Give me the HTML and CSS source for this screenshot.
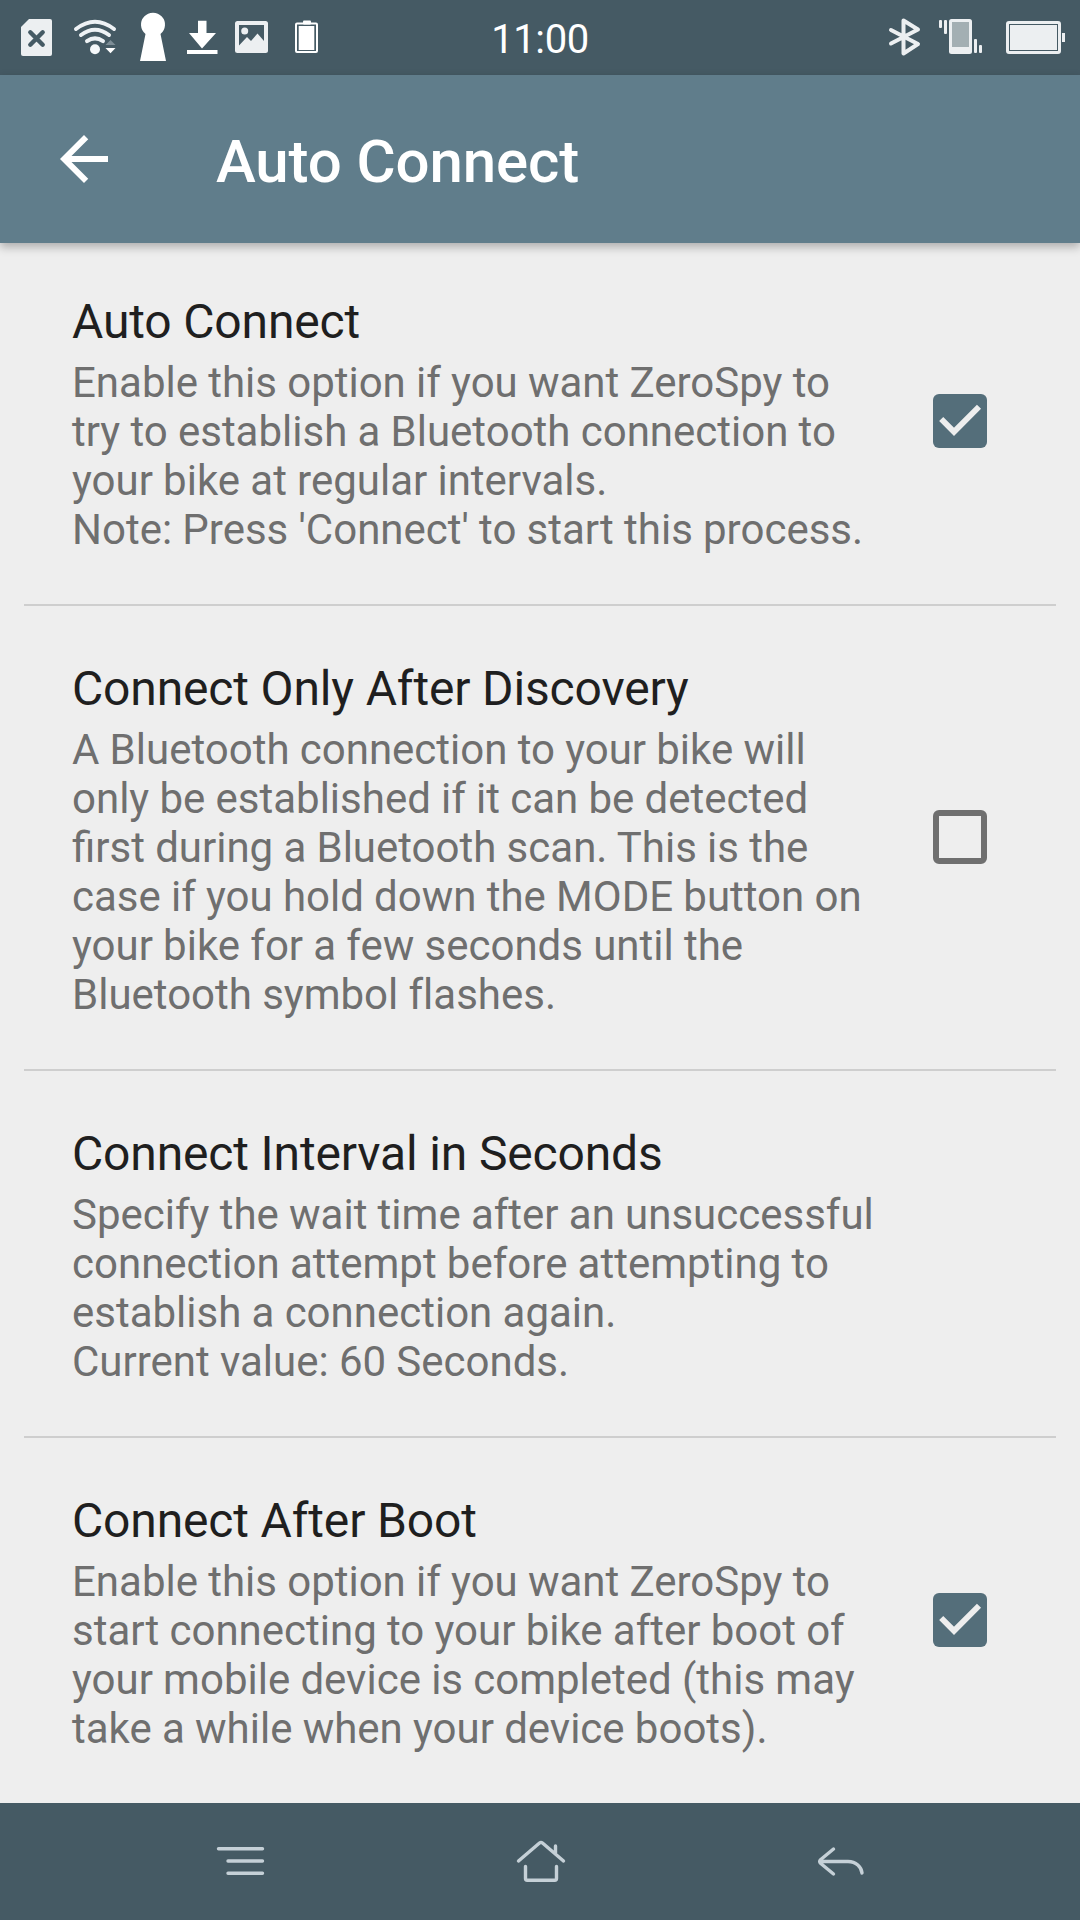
FILE: index.html
```html
<!DOCTYPE html>
<html lang="en">
<head>
<meta charset="utf-8">
<title>Auto Connect</title>
<link rel="stylesheet" href="styles.css">
</head>
<body>
<div class="screen">
  <div class="status-bar">
    <div class="status-left">
      <svg width="44" height="75" viewBox="16 0 44 75"><path fill="#eceff1" d="M29 19H50a2 2 0 0 1 2 2V54a2 2 0 0 1-2 2H23a2 2 0 0 1-2-2V27z"/><path d="M30.3 32.3 42.7 44.7M42.7 32.3 30.3 44.7" stroke="#455a64" stroke-width="4.4" stroke-linecap="round"/></svg>
      <svg width="70" height="75" viewBox="60 0 70 75"><g fill="none" stroke="#eef2f5" stroke-width="4" stroke-linecap="round"><path d="M76 29Q95 14.500 114 29"/><path d="M81 35Q95 24.500 109 35"/><path d="M87 41.200Q95 35.500 103 41.200"/></g><circle cx="95" cy="49.300" r="5" fill="#f5f8fa"/><path fill="#7d8d96" d="M105.500 45h10l-5-5z"/><path fill="#fff" d="M105.500 48h10l-5 5.300z"/></svg>
      <svg width="50" height="75" viewBox="130 0 50 75"><path fill="#fff" d="M145.500 34A12 12 0 1 1 160.500 34L166 61H140z"/></svg>
      <svg width="48" height="75" viewBox="180 0 48 75"><path fill="#fff" d="M198 20.700h8.500V33H216L202 48.500 189 33h9zM187 50h30.500v4H187z"/></svg>
      <svg width="52" height="75" viewBox="228 0 52 75"><rect x="235" y="21" width="33" height="32" rx="2.500" fill="#eceff1"/><path fill="#455a64" d="M239 25H264V41L257.500 33.500 251 41 247 37 239 45.500z"/><circle cx="244.700" cy="31" r="3.500" fill="#eceff1"/></svg>
      <svg width="50" height="75" viewBox="280 0 50 75"><rect x="303" y="20.500" width="8" height="4" rx="1" fill="#fff"/><rect x="296" y="23.500" width="21" height="28.500" rx="1" fill="none" stroke="#fff" stroke-width="2"/><rect x="298.700" y="26" width="15.600" height="24" fill="#fff"/></svg>
    </div>
    <div class="clock">11:00</div>
    <div class="status-right">
      <svg width="50" height="75" viewBox="880 0 50 75"><path d="M891 30 918 44 903.500 53.500V20.500L918 29.500 891 43.500" fill="none" stroke="#eceff1" stroke-width="4" stroke-linecap="round" stroke-linejoin="round"/></svg>
      <svg width="65" height="75" viewBox="930 0 65 75"><rect x="949" y="19" width="23" height="35" rx="2.500" fill="#eceff1"/><path fill="#a3afb3" d="M952 22h17v25h-17z"/><g fill="#eceff1"><rect x="939" y="20" width="3" height="8" rx="1"/><rect x="944" y="20" width="3" height="14" rx="1"/><rect x="974" y="39" width="3" height="14" rx="1"/><rect x="979" y="45" width="3" height="8" rx="1"/></g></svg>
      <svg width="85" height="75" viewBox="995 0 85 75"><rect x="1007.500" y="22.500" width="52" height="30" rx="1.500" fill="none" stroke="#eceff1" stroke-width="3"/><rect x="1010" y="25" width="47" height="25" fill="#eceff1"/><rect x="1009.500" y="24.500" width="48" height="26" fill="none" stroke="#455a64"/><path fill="#eceff1" d="M1062 33h3v9h-3z"/></svg>
    </div>
  </div>

  <header class="toolbar">
    <svg class="back" width="72" height="72" viewBox="0 0 24 24"><path fill="#fff" d="M20 11H7.830l5.590-5.590L12 4l-8 8 8 8 1.410-1.410L7.830 13H20z"/></svg>
    <h1 class="toolbar-title">Auto Connect</h1>
  </header>

  <main class="list">
    <section class="pref">
      <div class="text">
        <h2 class="title">Auto Connect</h2>
        <p class="summary">Enable this option if you want ZeroSpy to<br>try to establish a Bluetooth connection to<br>your bike at regular intervals.<br>Note: Press 'Connect' to start this process.</p>
      </div>
      <svg class="check" width="54" height="54" viewBox="0 0 54 54"><rect width="54" height="54" rx="6" fill="#546e7a"/><path d="M8.200 25 21 37.800 46 12.800" fill="none" stroke="#eee" stroke-width="5.800"/></svg>
    </section>
    <section class="pref">
      <div class="text">
        <h2 class="title">Connect Only After Discovery</h2>
        <p class="summary">A Bluetooth connection to your bike will<br>only be established if it can be detected<br>first during a Bluetooth scan. This is the<br>case if you hold down the MODE button on<br>your bike for a few seconds until the<br>Bluetooth symbol <span class="no-liga">flashes.</span></p>
      </div>
      <svg class="check" width="54" height="54" viewBox="0 0 54 54"><path fill="#6f6f6f" fill-rule="evenodd" d="M6 0H48a6 6 0 0 1 6 6V48a6 6 0 0 1-6 6H6a6 6 0 0 1-6-6V6a6 6 0 0 1 6-6zM6 6V48H48V6z"/></svg>
    </section>
    <section class="pref">
      <div class="text">
        <h2 class="title">Connect Interval in Seconds</h2>
        <p class="summary">Specify the wait time after an unsuccessful<br>connection attempt before attempting to<br>establish a connection again.<br>Current value: 60 Seconds.</p>
      </div>
    </section>
    <section class="pref">
      <div class="text">
        <h2 class="title">Connect After Boot</h2>
        <p class="summary">Enable this option if you want ZeroSpy to<br>start connecting to your bike after boot of<br>your mobile device is completed (this may<br>take a while when your device boots).</p>
      </div>
      <svg class="check" width="54" height="54" viewBox="0 0 54 54"><rect width="54" height="54" rx="6" fill="#546e7a"/><path d="M8.200 25 21 37.800 46 12.800" fill="none" stroke="#eee" stroke-width="5.800"/></svg>
    </section>
  </main>

  <nav class="nav-bar">
    <svg width="60" height="60" viewBox="210 1831 60 60"><path d="M218.500 1848.700H262.500M228 1861H262.500M228 1873.200H262.500"/></svg>
    <svg width="60" height="60" viewBox="511 1831 60 60"><path d="M518.500 1861 539.500 1843Q541 1841.800 542.500 1843L563.500 1861M555.500 1846V1853M525.500 1866.500V1878.500Q525.500 1880.200 527.200 1880.200H554.800Q556.500 1880.200 556.500 1878.500V1866.500"/></svg>
    <svg width="60" height="60" viewBox="811 1831 60 60"><path d="M833.500 1849 820.500 1859.800Q818.800 1861.500 820.500 1863.200L833.500 1874M820 1861.500H848C856 1861.500 861.500 1867 862 1873"/></svg>
  </nav>
</div>
</body>
</html>
```
FILE: styles.css
```css
* {
  box-sizing: border-box;
}

body {
  margin: 0;
  background: #eee;
  font-family: Roboto, sans-serif;
}

svg {
  display: block;
  flex: none;
}

.screen {
  display: flex;
  flex-direction: column;
  width: 1080px;
  height: 1920px;
  overflow: hidden;
}

.status-bar {
  display: grid;
  grid-template-columns: 1fr auto 1fr;
  flex: none;
  height: 75px;
  background: #455a64;
}

.status-left {
  display: flex;
  padding-left: 16px;
}

.status-right {
  display: flex;
  justify-content: flex-end;
}

.clock {
  color: #fff;
  font-size: 40px;
  letter-spacing: -0.4px;
  line-height: 79px;
}

.toolbar {
  display: flex;
  flex: none;
  z-index: 1;
  height: 168px;
  padding: 48px 48px 0;
  gap: 96px;
  background: #607d8b;
  box-shadow: 0 4px 9px rgba(0, 0, 0, 0.28);
}

.toolbar-title {
  margin: 3px 0 0;
  color: #fff;
  font-size: 60px;
  font-weight: 500;
  letter-spacing: -0.12px;
  line-height: 71px;
}

/* The list starts slightly underneath the toolbar. */
.list {
  flex: 1;
  min-height: 0;
  margin-top: -4px;
  padding: 0 24px;
  overflow: hidden;
}

.pref {
  display: flex;
  align-items: center;
  justify-content: space-between;
  padding: 54px 69px 50px 48px;
  border-bottom: 2px solid #cecece;
}

.pref:last-child {
  border-bottom: 0;
}

.title {
  margin: 0 0 8px;
  color: #1f1f1f;
  font-size: 48px;
  font-weight: 400;
  letter-spacing: -0.15px;
  line-height: 57px;
  white-space: nowrap;
}

.summary {
  margin: 0;
  color: #6f6f6f;
  font-size: 42px;
  line-height: 49px;
  white-space: nowrap;
  word-spacing: -0.2px;
}

.no-liga {
  font-variant-ligatures: none;
}

/* Centred on the whole row rather than on its padded content. */
.check {
  margin-bottom: 5px;
}

.nav-bar {
  display: flex;
  flex: none;
  height: 117px;
  padding: 28px 209px 0 210px;
  justify-content: space-between;
  background: #455a64;
}

.nav-bar path {
  fill: none;
  stroke: #c5d0d7;
  stroke-width: 3.4;
  stroke-linecap: round;
  stroke-linejoin: round;
}
```
